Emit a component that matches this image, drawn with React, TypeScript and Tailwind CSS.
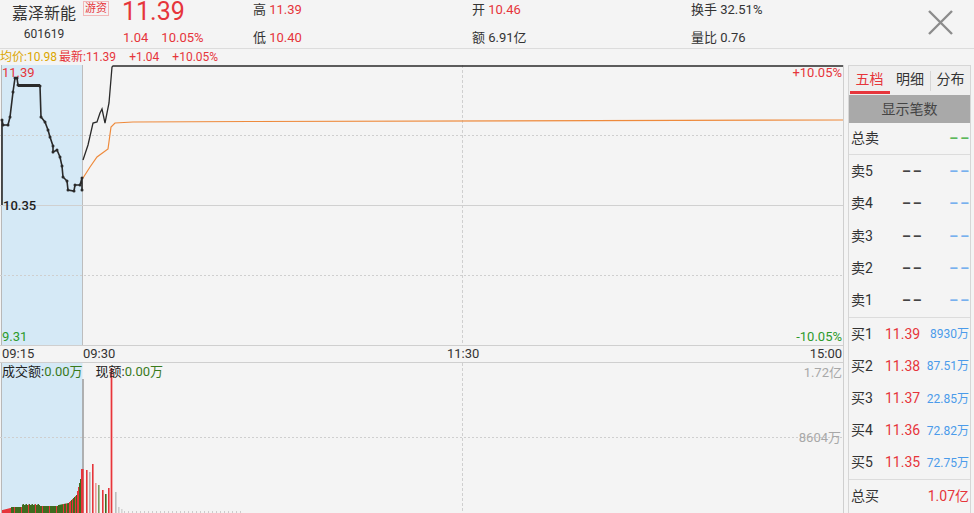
import React from "react";

const RED = "#e6353b";
const VOL_GREEN = "#3e6b1f";

// price chart, local coords (global y - 65)
const preLine: [number, number][] = [
  [2, 140], [2, 55], [3, 60], [8, 60], [10, 52], [13, 27], [15, 13], [17, 13], [18, 20],
  [40, 21], [41, 52], [45, 57], [48, 65], [50, 72], [53, 81], [53, 87], [57, 85],
  [60, 92], [62, 101], [63, 112], [67, 116], [68, 125], [74, 126], [75, 120],
  [80, 120], [82, 113], [82, 125],
];
const postLine: [number, number][] = [
  [83, 95], [88, 80], [93, 58], [97, 57], [100, 48], [102, 44], [105, 58],
  [109, 38], [112, 2], [113, 1], [843, 1],
];
const avgLine: [number, number][] = [
  [83, 113], [90, 102], [97, 92], [108, 84], [111, 62], [115, 58], [133, 57],
  [250, 56.5], [843, 55],
];

// volume chart, local coords (global y - 363)
const postBars: [number, number, string][] = [
  [82, 106, RED], [86, 107, RED], [89, 109, "#b5b5b5"], [92, 101, RED],
  [95, 120, "#f19a9a"], [98, 122, "#7a9a60"], [102, 127, RED], [105, 131, VOL_GREEN],
  [108, 125, RED], [115, 129, "#bdbdbd"], [118, 144, "#cfcfcf"], [121, 146, "#d5d5d5"],
];

function toPath(pts: [number, number][]) {
  return pts.map((p, i) => `${i ? "L" : "M"}${p[0]} ${p[1]}`).join(" ");
}

function preVolume() {
  const bars: { x: number; h: number; c: string }[] = [];
  for (let x = 2; x < 82; x++) {
    let h: number;
    if (x < 11) h = 3 + (x - 2) * 0.25;
    else if (x < 22) h = 6;
    else if (x < 40) h = 8 + ((x * 7) % 3) * 0.5;
    else if (x < 58) h = 7;
    else if (x < 68) h = 8 + (x - 58) * 0.2;
    else if (x < 76) h = 10 + (x - 68);
    else if (x < 80) h = 18 + (x - 76) * 4;
    else h = 34 + (x - 80) * 10;
    const red = x < 11 || x % 7 === 0 || (x > 62 && x % 3 === 0);
    bars.push({ x, h, c: red ? RED : VOL_GREEN });
  }
  return bars;
}

function PriceChart() {
  return (
    <div className="relative h-[281px] border-b border-[#cfcfcf]">
      <svg width="843" height="280" className="block">
        <rect x="2" y="0" width="80.5" height="280" fill="#d5e9f6" />
        <line x1="1.5" y1="0" x2="1.5" y2="280" stroke="#b8b8b8" />
        <line x1="82.5" y1="0" x2="82.5" y2="280" stroke="#bdbdbd" />
        <line x1="0" y1="70.5" x2="843" y2="70.5" stroke="#cfcfcf" strokeDasharray="2 2" />
        <line x1="0" y1="140.5" x2="843" y2="140.5" stroke="#d0d0d0" />
        <line x1="0" y1="210.5" x2="843" y2="210.5" stroke="#cfcfcf" strokeDasharray="2 2" />
        <line x1="462.5" y1="0" x2="462.5" y2="280" stroke="#cfcfcf" strokeDasharray="3 2" />
        <path d={toPath(avgLine)} fill="none" stroke="#ee8a3c" strokeWidth="1.2" />
        <path d={toPath(preLine)} fill="none" stroke="#2a2a2a" strokeWidth="1.6" />
        {preLine.slice(1).map((p, i) => (
          <circle key={i} cx={p[0]} cy={p[1]} r="1.5" fill="#2a2a2a" />
        ))}
        <rect x="18" y="19" width="22" height="3" fill="#2a2a2a" />
        <path d={toPath(postLine)} fill="none" stroke="#2a2a2a" strokeWidth="1.3" />
      </svg>
      <span className="absolute left-[2px] top-[1px] text-[13px] leading-[14px] text-[#e6353b]">11.39</span>
      <span className="absolute left-[3px] top-[134px] text-[13px] leading-[14px] font-medium text-[#1e1e1e]">10.35</span>
      <span className="absolute left-[2px] top-[265px] text-[13px] leading-[14px] text-[#2c9a2c]">9.31</span>
      <span className="absolute right-[1px] top-[1px] text-[13px] leading-[14px] text-[#e6353b]">+10.05%</span>
      <span className="absolute right-[1px] top-[265px] text-[13px] leading-[14px] text-[#2c9a2c]">-10.05%</span>
    </div>
  );
}

function VolumeChart() {
  const pre = preVolume();
  return (
    <div className="relative flex-1">
      <svg width="843" height="150" className="block">
        <rect x="2" y="0" width="80.5" height="150" fill="#d5e9f6" />
        <line x1="1.5" y1="0" x2="1.5" y2="150" stroke="#b8b8b8" />
        <line x1="0" y1="74.5" x2="843" y2="74.5" stroke="#cfcfcf" strokeDasharray="2 2" />
        <line x1="462.5" y1="0" x2="462.5" y2="150" stroke="#cfcfcf" strokeDasharray="3 2" />
        {pre.map((b) => (
          <rect key={b.x} x={b.x} y={150 - b.h} width="1" height={b.h} fill={b.c} />
        ))}
        <line x1="83" y1="16" x2="83" y2="150" stroke="#9a9a9a" strokeWidth="1.5" />
        {postBars.map(([x, top, c]) => (
          <rect key={x} x={x} y={top} width="1.6" height={150 - top} fill={c} />
        ))}
        {Array.from({ length: 30 }, (_, i) => 124 + i * 4).map((x) => (
          <rect key={x} x={x} y={148} width="1" height={2} fill="#cccccc" />
        ))}
        <rect x="110" y="5" width="3" height="145" fill="#f6c4c4" />
        <line x1="111.5" y1="5" x2="111.5" y2="150" stroke="#e6353b" strokeWidth="1.3" />
      </svg>
      <div className="absolute left-[2px] top-[1px] flex text-[13px] leading-[16px] text-[#222]">
        <span>成交额:</span>
        <span className="text-[#3a7a1c]">0.00万</span>
        <span className="ml-[13px]">现额:</span>
        <span className="text-[#3a7a1c]">0.00万</span>
      </div>
      <span className="absolute right-[1px] top-[2px] text-[13px] leading-[16px] text-[#a8a8a8]">1.72亿</span>
      <span className="absolute right-[2px] top-[67px] text-[13px] leading-[16px] text-[#a8a8a8]">8604万</span>
    </div>
  );
}

function HeaderStat({ label, value, red }: { label: string; value: string; red?: boolean }) {
  return (
    <div className="h-[19px] leading-[19px] text-[13px] text-[#333]">
      {label} <span className={red ? "text-[#e6353b]" : "text-[#333]"}>{value}</span>
    </div>
  );
}

const sells = ["卖5", "卖4", "卖3", "卖2", "卖1"];
const buys: [string, string, string][] = [
  ["买1", "11.39", "8930万"],
  ["买2", "11.38", "87.51万"],
  ["买3", "11.37", "22.85万"],
  ["买4", "11.36", "72.82万"],
  ["买5", "11.35", "72.75万"],
];

function OrderPanel() {
  return (
    <div className="ml-[4px] w-[123px] flex flex-col border-x border-t border-[#d6d6d6] text-[14px] text-[#333]">
      <div className="h-[29px] flex items-stretch bg-[#efefef]">
        <div className="w-[41px] flex flex-col items-center">
          <span className="flex-1 flex items-center text-[#e6353b] pt-[1px]">五档</span>
          <span className="h-[3px] w-[40px] bg-[#e6353b] mb-[1px]" />
        </div>
        <span className="w-[40px] flex items-center justify-center pb-[3px]">明细</span>
        <span className="w-px h-[20px] my-auto bg-[#d6d6d6]" />
        <span className="flex-1 flex items-center justify-center pb-[3px]">分布</span>
      </div>
      <div className="h-[28px] flex items-center justify-center bg-[#a9a9a9] text-[#444]">显示笔数</div>
      <div className="h-[32px] flex items-center justify-between pl-[2px] pr-[1px] border-b border-[#dcdcdc]">
        <span>总卖</span>
        <span className="font-bold text-[#5cb85c] tracking-[2px] mr-[-2px]">––</span>
      </div>
      <div className="h-[163px] flex flex-col border-b border-[#dcdcdc]">
        {sells.map((s) => (
          <div key={s} className="flex-1 flex items-center pl-[2px] pr-[1px]">
            <span className="w-[51px]">{s}</span>
            <span className="font-bold tracking-[2px] text-[#444]">––</span>
            <span className="flex-1 text-right font-bold text-[#78b0ee] tracking-[2px] mr-[-2px]">––</span>
          </div>
        ))}
      </div>
      <div className="h-[162px] flex flex-col border-b border-[#dcdcdc]">
        {buys.map(([l, p, v]) => (
          <div key={l} className="flex-1 flex items-center pl-[2px] pr-[1px]">
            <span className="w-[34px]">{l}</span>
            <span className="text-[#e6353b]">{p}</span>
            <span className="flex-1 text-right text-[12px] text-[#4b9bea]">{v}</span>
          </div>
        ))}
      </div>
      <div className="flex-1 flex items-center justify-between pl-[2px] pr-[1px]">
        <span>总买</span>
        <span className="text-[#e6353b]">1.07亿</span>
      </div>
    </div>
  );
}

export default function App() {
  return (
    <div className="w-[974px] h-[513px] bg-[#f4f4f4] flex flex-col overflow-hidden font-[family-name:Roboto,'Noto_Sans_CJK_SC',sans-serif] text-[#333]">
      <header className="h-[49px] flex border-b border-[#dcdcdc]">
        <div className="w-[122px] pl-[12px] flex flex-col">
          <div className="flex items-start">
            <span className="h-[28px] leading-[28px] text-[16px] text-[#333]">嘉泽新能</span>
            <span className="ml-[7px] mt-[1px] px-[1px] border border-[#f2b8b8] text-[11px] leading-[13px] text-[#e6353b]">
              游资
            </span>
          </div>
          <span className="mt-[-2px] w-[64px] text-center h-[16px] leading-[16px] text-[12px] text-[#333]">601619</span>
        </div>
        <div className="w-[131px] flex flex-col">
          <span className="h-[28px] leading-[24px] text-[25px] text-[#e6353b]">11.39</span>
          <div className="h-[19px] leading-[19px] text-[13px] text-[#e6353b] pl-[1px]">
            1.04<span className="ml-[13px]">10.05%</span>
          </div>
        </div>
        <div className="w-[219px] flex flex-col">
          <HeaderStat label="高" value="11.39" red />
          <div className="mt-[9px]">
            <HeaderStat label="低" value="10.40" red />
          </div>
        </div>
        <div className="w-[219px] flex flex-col">
          <HeaderStat label="开" value="10.46" red />
          <div className="mt-[9px]">
            <HeaderStat label="额" value="6.91亿" />
          </div>
        </div>
        <div className="w-[237px] flex flex-col">
          <HeaderStat label="换手" value="32.51%" />
          <div className="mt-[9px]">
            <HeaderStat label="量比" value="0.76" />
          </div>
        </div>
        <div className="flex-1 flex items-start pt-[10px]">
          <svg width="26" height="25" viewBox="0 0 26 25">
            <path d="M1 1 L24 24 M24 1 L1 24" stroke="#8c8c8c" strokeWidth="2.4" fill="none" />
          </svg>
        </div>
      </header>
      <div className="h-[16px] leading-[16px] text-[12px] flex">
        <span className="text-[#dba600]">均价:10.98</span>
        <span className="ml-[2px] text-[#e6353b]">最新:11.39</span>
        <span className="ml-[13px] text-[#e6353b]">+1.04</span>
        <span className="ml-[13px] text-[#e6353b]">+10.05%</span>
      </div>
      <div className="flex-1 flex min-h-0">
        <div className="w-[844px] flex flex-col border-r border-[#cfcfcf]">
          <PriceChart />
          <div className="h-[17px] flex border-b border-[#cfcfcf] text-[13px] leading-[16px] text-[#333] pl-[2px]">
            <span className="w-[81px]">09:15</span>
            <span className="w-[364px]">09:30</span>
            <span>11:30</span>
            <span className="flex-1 text-right pr-[1px]">15:00</span>
          </div>
          <VolumeChart />
        </div>
        <OrderPanel />
      </div>
    </div>
  );
}
